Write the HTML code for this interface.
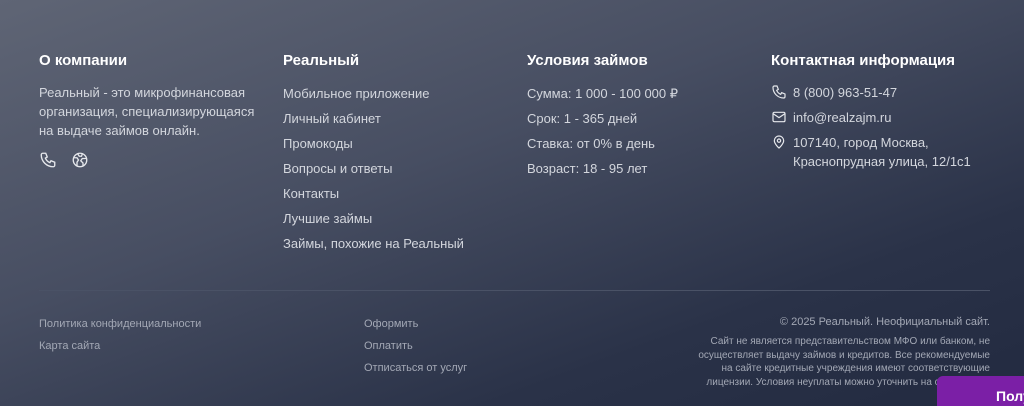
<!DOCTYPE html><html><head><meta charset="utf-8"><style>
*{margin:0;padding:0;box-sizing:border-box}
html,body{width:1024px;height:406px;overflow:hidden}
body{font-family:"Liberation Sans",sans-serif;background:linear-gradient(160deg,#5f6575 0%,#474e62 40%,#2a3248 75%,#222a40 100%);position:relative;color:#dde0e6}
.col{position:absolute;top:51px}
h3{font-size:15px;font-weight:bold;color:#fff;height:20px;line-height:20px;margin-bottom:12px}
.t{font-size:13px;line-height:19px;color:#d3d6dd}
.l{font-size:13px;line-height:25px;color:#d3d6dd;margin-top:-2px}
.ic{display:flex;align-items:flex-start;font-size:13px;line-height:19px;color:#d3d6dd;margin-bottom:6px}
.ic svg{width:16px;height:16px;margin:1px 6px 0 0;flex:none}
.hr{position:absolute;left:39px;right:34px;top:290px;height:1px;background:#4a5266}
.b{position:absolute;font-size:11px;line-height:22px;color:#a3a8b5}
</style></head><body>
<div class="col" style="left:39px;width:230px"><h3>О компании</h3>
<div class="t">Реальный - это микрофинансовая организация, специализирующаяся на выдаче займов онлайн.</div>
<div style="margin-top:11px;display:flex;gap:14px">
<svg width="18" height="18" viewBox="0 0 24 24" fill="none" stroke="#e6e8ec" stroke-width="1.8"><path d="M5 3h4l2 5-2.5 1.5a11 11 0 0 0 6 6L16 13l5 2v4a2 2 0 0 1-2 2A16 16 0 0 1 3 5a2 2 0 0 1 2-2"/></svg>
<svg width="18" height="18" viewBox="0 0 24 24" fill="none" stroke="#e6e8ec" stroke-width="1.8"><circle cx="12" cy="12" r="9"/><path d="M4 9h4l2 3-2 3v5M20 10h-5l-2 3 3 3v4M9 4l2 3h3l1-3"/></svg></div></div>
<div class="col" style="left:283px"><h3>Реальный</h3><div class="l">Мобильное приложение<br>Личный кабинет<br>Промокоды<br>Вопросы и ответы<br>Контакты<br>Лучшие займы<br>Займы, похожие на Реальный</div></div>
<div class="col" style="left:527px"><h3>Условия займов</h3><div class="l">Сумма: 1 000 - 100 000 ₽<br>Срок: 1 - 365 дней<br>Ставка: от 0% в день<br>Возраст: 18 - 95 лет</div></div>
<div class="col" style="left:771px"><h3>Контактная информация</h3>
<div class="ic" style="margin-top:1px"><svg viewBox="0 0 24 24" fill="none" stroke="#e6e8ec" stroke-width="1.8"><path d="M5 3h4l2 5-2.5 1.5a11 11 0 0 0 6 6L16 13l5 2v4a2 2 0 0 1-2 2A16 16 0 0 1 3 5a2 2 0 0 1 2-2"/></svg>8 (800) 963-51-47</div>
<div class="ic"><svg viewBox="0 0 24 24" fill="none" stroke="#e6e8ec" stroke-width="1.8"><rect x="3" y="5" width="18" height="14" rx="2"/><path d="M3 7l9 6 9-6"/></svg>info@realzajm.ru</div>
<div class="ic"><svg viewBox="0 0 24 24" fill="none" stroke="#e6e8ec" stroke-width="1.8"><path d="M12 21s-7-6-7-11a7 7 0 0 1 14 0c0 5-7 11-7 11z"/><circle cx="12" cy="10" r="2.5"/></svg>107140, город Москва,<br>Краснопрудная улица, 12/1с1</div></div>
<div class="hr"></div>
<div class="b" style="left:39px;top:313px">Политика конфиденциальности<br>Карта сайта</div>
<div class="b" style="left:364px;top:313px">Оформить<br>Оплатить<br>Отписаться от услуг</div>
<div class="b" style="right:34px;top:311px;text-align:right">© 2025 Реальный. Неофициальный сайт.</div>
<div class="b" style="right:34px;top:335px;width:300px;text-align:right;font-size:10px;line-height:13.5px">Сайт не является представительством МФО или банком, не осуществляет выдачу займов и кредитов. Все рекомендуемые на сайте кредитные учреждения имеют соответствующие лицензии. Условия неуплаты можно уточнить на сайте МФО.</div>
<div style="position:absolute;left:937px;top:376px;width:87px;height:30px;background:#7b1fa6;border-radius:6px 0 0 0;color:#fff;font-weight:bold;font-size:14px;padding:12px 0 0 59px;overflow:hidden;white-space:nowrap">Получить</div>
</body></html>
